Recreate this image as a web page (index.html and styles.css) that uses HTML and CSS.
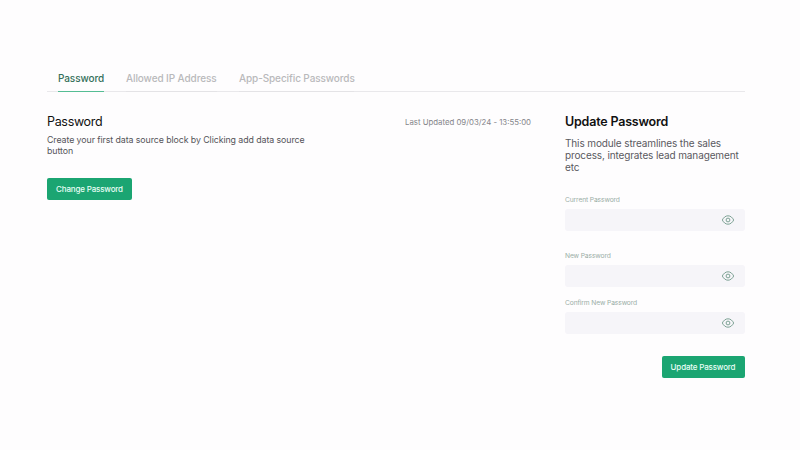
FILE: index.html
```html
<!DOCTYPE html>
<html lang="en">
<head>
<meta charset="utf-8">
<title>Password settings</title>
<link rel="stylesheet" href="styles.css">
</head>
<body>
<svg width="0" height="0" class="defs"><symbol id="eye" viewBox="0 0 14 12"><path d="M1.3 6C2.6 3.5 4.5 1.8 7 1.8S11.400 3.500 12.700 6C11.400 8.500 9.500 10.200 7 10.200S2.600 8.500 1.300 6Z"/><circle cx="7" cy="6" r="1.900"/></symbol></svg>
<main class="page">
  <nav class="tabs">
    <a class="tab active"><span>Password</span></a>
    <a class="tab tab-ip"><span>Allowed IP Address</span></a>
    <a class="tab tab-app"><span>App-Specific Passwords</span></a>
  </nav>
  <div class="content">
    <section class="overview">
      <div class="intro">
        <h1><span>Password</span></h1>
        <p><span>Create your first data source block by Clicking add data source<br>button</span></p>
        <button class="btn change"><span>Change Password</span></button>
      </div>
      <div class="updated"><span>Last Updated 09/03/24 - 13:55:00</span></div>
    </section>
    <aside class="panel">
      <h2><span>Update Password</span></h2>
      <p><span>This module streamlines the sales<br>process, integrates lead management<br>etc</span></p>
      <div class="field current"><label>Current Password</label><div class="input"><svg class="eye"><use href="#eye"/></svg></div></div>
      <div class="field new"><label>New Password</label><div class="input"><svg class="eye"><use href="#eye"/></svg></div></div>
      <div class="field"><label>Confirm New Password</label><div class="input"><svg class="eye"><use href="#eye"/></svg></div></div>
      <button class="btn update"><span>Update Password</span></button>
    </aside>
  </div>
</main>
</body>
</html>
```
FILE: styles.css
```css
* { box-sizing: border-box; }
body { margin: 0; background: #fefdfe; font-family: Inter, "Liberation Sans", sans-serif; color: #111; }
.defs { display: block; }
h1, h2, p { margin: 0; font-weight: 400; white-space: nowrap; }
.page { width: 800px; height: 450px; padding: 66px 55.500px 0 47px; }
.tabs { display: flex; gap: 22px; height: 26px; padding-left: 11px; border-bottom: 1px solid #e9e8eb; }
.tab { width: 46px; height: 26px; line-height: 25px; font-size: 10px; font-weight: 500; letter-spacing: -.1px; color: #b9b9bb; white-space: nowrap; border-bottom: 1px solid #e4e3e6; }
.tab-ip { width: 91px; }
.tab-app { width: 115px; }
.tab.active { color: #34705a; border-bottom-color: #55bd94; }
.content { display: flex; justify-content: space-between; padding-top: 20px; }
.overview { display: flex; justify-content: space-between; width: 484px; }
.intro h1 { padding-top: 1px; font-size: 12.500px; line-height: 18px; letter-spacing: -.32px; }
.intro p { margin-top: 3px; font-size: 8.800px; line-height: 11px; letter-spacing: -.075px; color: #555459; }
.updated { font-size: 7.800px; line-height: 12px; padding-top: 4px; color: #85858a; white-space: nowrap; }
.btn { display: flex; align-items: center; justify-content: center; height: 22px; padding: 0; border: 0; border-radius: 2px; background: #1ba572; color: #e9fff6; font: 500 8px/12px Inter, sans-serif; letter-spacing: -.17px; white-space: nowrap; }
.change { width: 85px; margin-top: 22px; }
.panel { width: 179.500px; }
.panel h2 { padding-top: 1px; font-size: 12.500px; line-height: 18px; font-weight: 600; letter-spacing: -.2px; }
.panel p { margin-top: 6px; font-size: 10px; line-height: 12.200px; letter-spacing: -.125px; color: #5a595e; }
.field label { display: block; font-size: 6.700px; line-height: 10px; letter-spacing: -.12px; color: #9aada6; white-space: nowrap; }
.input { display: flex; align-items: center; justify-content: flex-end; height: 22px; margin-top: 4px; padding-right: 9.500px; border-radius: 3px; background: #f6f5f9; }
.current { margin: 21.500px 0 20px; }
.new { margin-bottom: 11px; }
.eye { width: 14px; height: 12px; fill: none; stroke: #6f9989; stroke-width: .9; }
.update { width: 83px; margin: 22px 0 0 auto; }
```
